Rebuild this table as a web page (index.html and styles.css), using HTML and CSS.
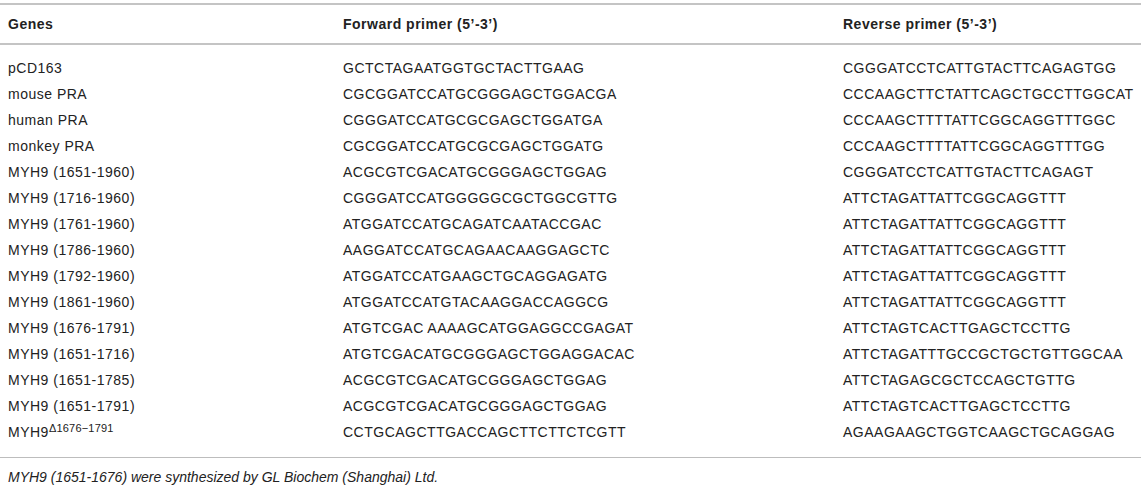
FILE: index.html
```html
<!DOCTYPE html>
<html>
<head>
<meta charset="utf-8">
<link rel="stylesheet" href="styles.css">
</head>
<body>
<div class="tbl">
  <div class="head">
    <div class="c">Genes</div>
    <div class="c">Forward primer (5’-3’)</div>
    <div class="c">Reverse primer (5’-3’)</div>
  </div>
  <div class="body">
    <div class="c">pCD163</div><div class="c">GCTCTAGAATGGTGCTACTTGAAG</div><div class="c">CGGGATCCTCATTGTACTTCAGAGTGG</div>
    <div class="c">mouse PRA</div><div class="c">CGCGGATCCATGCGGGAGCTGGACGA</div><div class="c">CCCAAGCTTCTATTCAGCTGCCTTGGCAT</div>
    <div class="c">human PRA</div><div class="c">CGGGATCCATGCGCGAGCTGGATGA</div><div class="c">CCCAAGCTTTTATTCGGCAGGTTTGGC</div>
    <div class="c">monkey PRA</div><div class="c">CGCGGATCCATGCGCGAGCTGGATG</div><div class="c">CCCAAGCTTTTATTCGGCAGGTTTGG</div>
    <div class="c">MYH9 (1651-1960)</div><div class="c">ACGCGTCGACATGCGGGAGCTGGAG</div><div class="c">CGGGATCCTCATTGTACTTCAGAGT</div>
    <div class="c">MYH9 (1716-1960)</div><div class="c">CGGGATCCATGGGGGCGCTGGCGTTG</div><div class="c">ATTCTAGATTATTCGGCAGGTTT</div>
    <div class="c">MYH9 (1761-1960)</div><div class="c">ATGGATCCATGCAGATCAATACCGAC</div><div class="c">ATTCTAGATTATTCGGCAGGTTT</div>
    <div class="c">MYH9 (1786-1960)</div><div class="c">AAGGATCCATGCAGAACAAGGAGCTC</div><div class="c">ATTCTAGATTATTCGGCAGGTTT</div>
    <div class="c">MYH9 (1792-1960)</div><div class="c">ATGGATCCATGAAGCTGCAGGAGATG</div><div class="c">ATTCTAGATTATTCGGCAGGTTT</div>
    <div class="c">MYH9 (1861-1960)</div><div class="c">ATGGATCCATGTACAAGGACCAGGCG</div><div class="c">ATTCTAGATTATTCGGCAGGTTT</div>
    <div class="c">MYH9 (1676-1791)</div><div class="c">ATGTCGAC AAAAGCATGGAGGCCGAGAT</div><div class="c">ATTCTAGTCACTTGAGCTCCTTG</div>
    <div class="c">MYH9 (1651-1716)</div><div class="c">ATGTCGACATGCGGGAGCTGGAGGACAC</div><div class="c">ATTCTAGATTTGCCGCTGCTGTTGGCAA</div>
    <div class="c">MYH9 (1651-1785)</div><div class="c">ACGCGTCGACATGCGGGAGCTGGAG</div><div class="c">ATTCTAGAGCGCTCCAGCTGTTG</div>
    <div class="c">MYH9 (1651-1791)</div><div class="c">ACGCGTCGACATGCGGGAGCTGGAG</div><div class="c">ATTCTAGTCACTTGAGCTCCTTG</div>
    <div class="c">MYH9<sup class="sup">Δ1676−1791</sup></div><div class="c">CCTGCAGCTTGACCAGCTTCTTCTCGTT</div><div class="c">AGAAGAAGCTGGTCAAGCTGCAGGAG</div>
  </div>
  <div class="foot">MYH9 (1651-1676) were synthesized by GL Biochem (Shanghai) Ltd.</div>
</div>
</body>
</html>
```

FILE: styles.css
```css
html, body {
  margin: 0;
  padding: 0;
  background: #ffffff;
}
body {
  font-family: "Liberation Sans", Arial, sans-serif;
  font-size: 14px;
  color: #222222;
  padding-top: 3px;
}
.tbl {
  width: 1141px;
}
.head, .body {
  display: grid;
  grid-template-columns: 335px 500px 1fr;
  align-items: center;
  letter-spacing: 0.5px;
}
.head {
  border-top: 2px solid #c4c4c4;
  border-bottom: 2px solid #c4c4c4;
  height: 38px;
  font-weight: bold;
}
.body {
  grid-auto-rows: 26px;
  padding: 10px 0 12px;
  border-bottom: 1px solid #bdbdbd;
}
.c {
  padding-left: 8px;
  white-space: nowrap;
  line-height: 16px;
}
.sup {
  font-size: 11px;
  letter-spacing: 0.2px;
  vertical-align: 5px;
  line-height: 0;
}
.foot {
  font-style: italic;
  font-size: 14px;
  padding: 11px 0 0 8px;
  line-height: 16px;
}
```
